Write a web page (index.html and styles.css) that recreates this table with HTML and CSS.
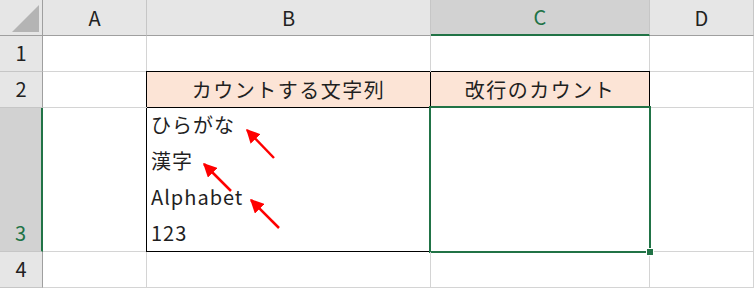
FILE: index.html
```html
<!DOCTYPE html>
<html lang="ja">
<head>
<meta charset="utf-8">
<title>改行のカウント</title>
<link rel="stylesheet" href="styles.css">
</head>
<body>
<div class="sheet">
  <div class="hd corner"><span class="tri"></span></div>
  <div class="hd col">A</div>
  <div class="hd col">B</div>
  <div class="hd col sel-col">C</div>
  <div class="hd col">D</div>

  <div class="hd row">1</div>
  <div class="cell"></div>
  <div class="cell"></div>
  <div class="cell"></div>
  <div class="cell"></div>

  <div class="hd row">2</div>
  <div class="cell"></div>
  <div class="cell th th-left">カウントする文字列</div>
  <div class="cell th">改行のカウント</div>
  <div class="cell"></div>

  <div class="hd row sel-row">3</div>
  <div class="cell"></div>
  <div class="cell td td-left">
    <div class="lines">
      <span>ひらがな</span>
      <span>漢字</span>
      <span>Alphabet</span>
      <span>123</span>
    </div>
    <svg class="arrows" width="284" height="144" viewBox="0 0 284 144">
      <defs>
        <marker id="head" viewBox="0 0 10 10" refX="9" refY="5" markerWidth="5.5" markerHeight="5.5" orient="auto">
          <path d="M0 0 L10 5 L0 10 Z" fill="#ff0000"/>
        </marker>
      </defs>
      <line x1="127" y1="50" x2="100" y2="22" stroke="#ff0000" stroke-width="2.5" marker-end="url(#head)"/>
      <line x1="84" y1="83" x2="57" y2="56" stroke="#ff0000" stroke-width="2.5" marker-end="url(#head)"/>
      <line x1="132" y1="120" x2="104" y2="92" stroke="#ff0000" stroke-width="2.5" marker-end="url(#head)"/>
    </svg>
  </div>
  <div class="cell td active"><span class="handle"></span></div>
  <div class="cell"></div>

  <div class="hd row">4</div>
  <div class="cell"></div>
  <div class="cell"></div>
  <div class="cell"></div>
  <div class="cell"></div>
</div>
</body>
</html>
```

FILE: styles.css
```css
html, body {
  margin: 0;
  padding: 0;
  background: #ffffff;
}

body {
  font-family: "Noto Sans CJK JP", "Noto Sans", sans-serif;
  font-size: 20px;
  color: #1f1f1f;
}

.sheet {
  display: grid;
  grid-template-columns: 43px 104px 284px 219px 104px;
  grid-template-rows: 36px 36px 36px 144px 36px;
  width: 754px;
  height: 288px;
  overflow: hidden;
}

.sheet > div {
  box-sizing: border-box;
  position: relative;
}

/* headings */
.hd {
  background: #e6e6e6;
  display: flex;
  justify-content: center;
  line-height: 36px;
  color: #222222;
}

.col {
  border-right: 1px solid #c6c6c6;
  border-bottom: 1px solid #9f9f9f;
  align-items: center;
}

.row {
  border-right: 1px solid #9f9f9f;
  border-bottom: 1px solid #c6c6c6;
  align-items: flex-end;
}

.corner {
  border-right: 1px solid #9f9f9f;
  border-bottom: 1px solid #9f9f9f;
}

.tri {
  position: absolute;
  right: 3px;
  bottom: 3px;
  width: 27px;
  height: 27px;
  background: #b4b4b4;
  clip-path: polygon(100% 0, 100% 100%, 0 100%);
}

.sel-col {
  background: #d2d2d2;
  color: #217346;
  border-bottom: 2px solid #217346;
}

.sel-row {
  background: #d2d2d2;
  color: #217346;
  border-right: 2px solid #217346;
}

/* cells */
.cell {
  border-right: 1px solid #d4d4d4;
  border-bottom: 1px solid #d4d4d4;
}

.th {
  background: #fce4d6;
  border-right-color: #000000;
  border-bottom-color: #000000;
  box-shadow: 0 -1px 0 0 #000000;
  text-align: center;
  line-height: 35px;
  letter-spacing: 1.5px;
}

.th-left {
  box-shadow: -1px -1px 0 0 #000000;
}

.td {
  border-right-color: #000000;
  border-bottom-color: #000000;
}

.td-left {
  box-shadow: -1px 0 0 0 #000000;
}

.lines {
  display: flex;
  flex-direction: column;
  justify-content: flex-end;
  height: 100%;
  padding-left: 4px;
  line-height: 36px;
  letter-spacing: 1px;
}

.arrows {
  position: absolute;
  left: 0;
  top: 0;
}

/* active cell frame */
.active::after {
  content: "";
  position: absolute;
  left: -2px;
  top: -2px;
  right: -2px;
  bottom: -2px;
  border: 2px solid #217346;
}

.handle {
  position: absolute;
  right: -5px;
  bottom: -5px;
  width: 6px;
  height: 6px;
  background: #217346;
  border: 1px solid #ffffff;
  z-index: 2;
}
```
